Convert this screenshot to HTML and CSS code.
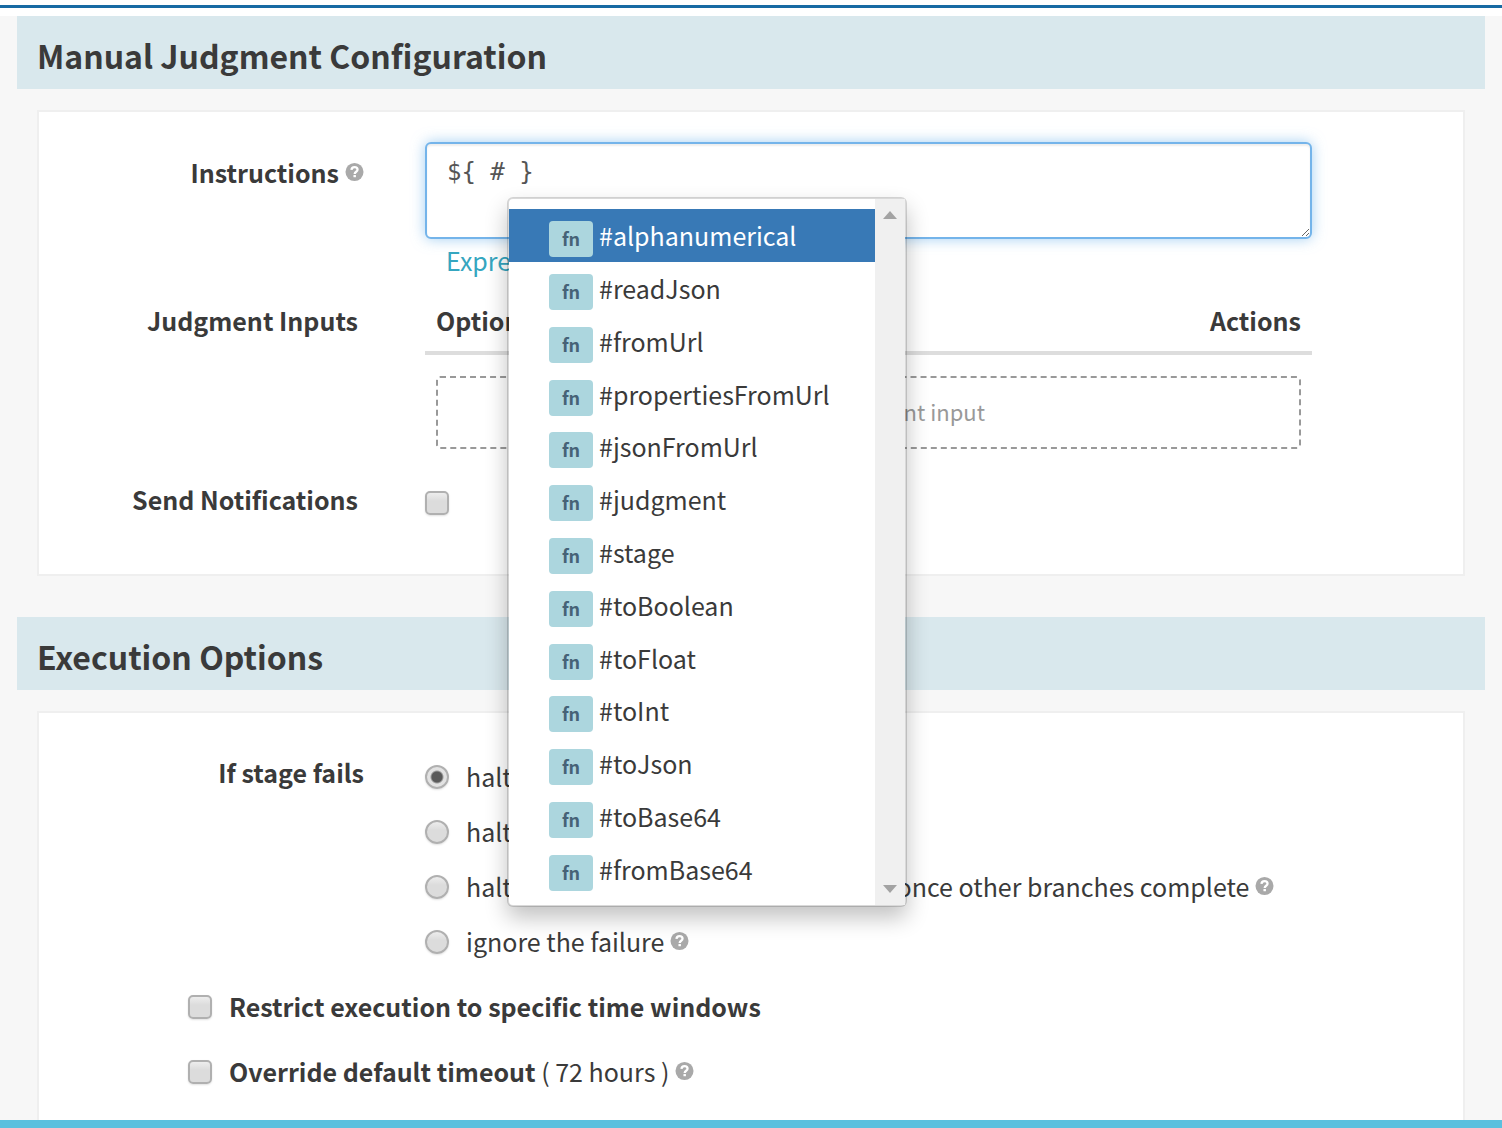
FILE: index.html
```html
<!DOCTYPE html>
<html lang="en">
<head>
<meta charset="utf-8">
<title>Manual Judgment Configuration</title>
<link rel="stylesheet" href="styles.css">
</head>
<body>
<svg class="sprite" aria-hidden="true">
  <symbol id="help" viewBox="0 0 20 20">
    <circle cx="10" cy="10" r="9.5" fill="currentColor"/>
    <path d="M6.8 7.8C6.9 5.700 8.300 4.900 10 4.900C11.900 4.900 13.200 6 13.200 7.600C13.200 9.800 10.200 9.700 10.200 12" fill="none" stroke="#fff" stroke-width="2.400"/>
    <rect x="8.900" y="13.200" width="2.600" height="2.300" fill="#fff"/>
  </symbol>
  <symbol id="plus" viewBox="0 0 20 20">
    <circle cx="10" cy="10" r="9.5" fill="currentColor"/>
    <path d="M10 5V15M5 10H15" stroke="#fff" stroke-width="3"/>
  </symbol>
</svg>
<header class="topbar"></header>
<main class="content">
  <section class="section">
    <h2 class="section-title">Manual Judgment Configuration</h2>
    <div class="card">
      <div class="row row-instructions">
        <div class="row-label with-help"><label for="instructions">Instructions</label><svg class="help"><use href="#help"/></svg></div>
        <div class="field">
          <textarea id="instructions" class="instructions" spellcheck="false">${ # }</textarea>
          <a class="docs-link" href="#docs">Expression Docs</a>
          <div class="menu">
            <ul class="menu-list">
              <li class="menu-item active"><span class="badge">fn</span>#alphanumerical</li>
              <li class="menu-item"><span class="badge">fn</span>#readJson</li>
              <li class="menu-item"><span class="badge">fn</span>#fromUrl</li>
              <li class="menu-item"><span class="badge">fn</span>#propertiesFromUrl</li>
              <li class="menu-item"><span class="badge">fn</span>#jsonFromUrl</li>
              <li class="menu-item"><span class="badge">fn</span>#judgment</li>
              <li class="menu-item"><span class="badge">fn</span>#stage</li>
              <li class="menu-item"><span class="badge">fn</span>#toBoolean</li>
              <li class="menu-item"><span class="badge">fn</span>#toFloat</li>
              <li class="menu-item"><span class="badge">fn</span>#toInt</li>
              <li class="menu-item"><span class="badge">fn</span>#toJson</li>
              <li class="menu-item"><span class="badge">fn</span>#toBase64</li>
              <li class="menu-item"><span class="badge">fn</span>#fromBase64</li>
            </ul>
            <div class="scrollbar"><span class="arrow up"></span><span class="arrow down"></span></div>
          </div>
        </div>
      </div>
      <div class="row row-inputs">
        <div class="row-label">Judgment Inputs</div>
        <table class="inputs">
          <thead><tr><th>Option</th><th class="actions">Actions</th></tr></thead>
          <tbody><tr><td colspan="2"><button type="button" class="add"><svg class="plus"><use href="#plus"/></svg>Add judgment input</button></td></tr></tbody>
        </table>
      </div>
      <div class="row row-notify">
        <label class="row-label" for="notify">Send Notifications</label>
        <div class="choice"><input type="checkbox" id="notify" class="box"></div>
      </div>
    </div>
  </section>
  <section class="section">
    <h2 class="section-title">Execution Options</h2>
    <div class="card card-last">
      <div class="row">
        <div class="row-label with-help" id="fails">If stage fails</div>
        <div class="choices" role="radiogroup" aria-labelledby="fails">
          <label class="choice"><input type="radio" name="fail" class="box round" checked><span>halt the entire pipeline</span></label>
          <label class="choice"><input type="radio" name="fail" class="box round"><span>halt this branch of the pipeline</span></label>
          <label class="choice"><input type="radio" name="fail" class="box round"><span>halt this branch and fail the pipeline, once other branches complete</span><svg class="help"><use href="#help"/></svg></label>
          <label class="choice"><input type="radio" name="fail" class="box round"><span>ignore the failure</span><svg class="help"><use href="#help"/></svg></label>
        </div>
      </div>
      <div class="options">
        <label class="choice"><input type="checkbox" class="box"><strong>Restrict execution to specific time windows</strong></label>
        <label class="choice"><input type="checkbox" class="box"><span><strong>Override default timeout</strong> ( 72 hours )</span><svg class="help"><use href="#help"/></svg></label>
      </div>
    </div>
  </section>
</main>
<footer class="bottombar"></footer>
</body>
</html>
```
FILE: styles.css
```css
* { box-sizing: border-box; }

body {
  margin: 0;
  min-height: 100vh;
  display: flex;
  flex-direction: column;
  background: #fff;
  color: #3a3a3a;
  font: 25px/32px "Noto Sans CJK SC", "Noto Sans", sans-serif;
}

.sprite { display: none; }

.topbar {
  height: 8px;
  margin-bottom: 8px;
  border-bottom: 3px solid #176aa3;
}

.content {
  flex: 1;
  padding: 0 17px;
  display: flex;
  flex-direction: column;
  gap: 41px;
  background: #f7f7f7;
}

.bottombar { height: 8px; background: #5bc0de; }

.section { display: flex; flex-direction: column; gap: 21px; }
.section:last-child { flex: 1; }

.section-title {
  margin: 0;
  padding: 19px 20px 14px;
  background: #d9e8ed;
  font-size: 32px;
  line-height: 40px;
  font-weight: 700;
}

.card {
  margin: 0 20px;
  padding: 30px 151px 59px 0;
  border: 2px solid #efefef;
  background: #fff;
}

.card-last { flex: 1; padding-top: 43px; padding-bottom: 16px; border-bottom: 0; }

.row {
  display: grid;
  grid-template-columns: 325px minmax(0, 1fr);
  column-gap: 61px;
}

.row-label { font-weight: 700; text-align: right; padding-right: 6px; }
.row-label.with-help {
  display: flex;
  justify-content: flex-end;
  gap: 6px;
  padding-right: 0;
}
.row-instructions .row-label { padding-top: 14px; }

.help { flex: none; width: 19px; height: 20px; margin-top: 6px; color: #a9a9a9; }

.field { position: relative; }

.instructions {
  display: block;
  width: 100%;
  height: 97px;
  padding: 11px 20px;
  border: 2px solid #74b4ea;
  border-radius: 6px;
  outline: 0;
  box-shadow: inset 0 2px 2px rgba(0, 0, 0, .07), 0 0 14px rgba(102, 175, 233, .6);
  resize: vertical;
  color: #555;
  font: 24px/34px "DejaVu Sans Mono", monospace;
}

.docs-link {
  display: block;
  margin: 5px 0 0 21px;
  color: #35a6c0;
  text-decoration: none;
}

.menu {
  position: absolute;
  left: 82px;
  top: 55px;
  z-index: 2;
  width: 400px;
  height: 710px;
  display: flex;
  border: 2px solid rgba(0, 0, 0, .15);
  border-radius: 6px;
  background: #fff;
  background-clip: padding-box;
  box-shadow: 0 11px 22px rgba(0, 0, 0, .24);
}

.menu-list {
  flex: 1;
  margin: 0;
  padding: 10px 0;
  display: grid;
  grid-auto-rows: 1fr;
  list-style: none;
}

.menu-item {
  display: flex;
  align-items: center;
  gap: 6px;
  padding-left: 40px;
}
.menu-item.active { background: #3879b6; color: #fff; }

.badge {
  width: 44px;
  margin-top: 8px;
  padding-bottom: 2px;
  border-radius: 4px;
  background: #acd6de;
  color: #466277;
  text-align: center;
  font-size: 18px;
  line-height: 34px;
  font-weight: 700;
}

.scrollbar {
  width: 30px;
  padding: 12px 8px;
  display: flex;
  flex-direction: column;
  justify-content: space-between;
  background: #f0f0f0;
}
.arrow { border: 7px solid transparent; }
.arrow.up { border-top: 0; border-bottom: 8px solid #a3a3a3; }
.arrow.down { border-bottom: 0; border-top: 8px solid #a3a3a3; }

.row-inputs { margin-top: 28px; }

.inputs { width: 100%; border-collapse: collapse; }
.inputs th {
  padding: 0 11px 15px;
  border-bottom: 4px solid #ddd;
  text-align: left;
  font-weight: 700;
}
.inputs .actions { text-align: right; }
.inputs td { padding: 21px 11px 0; }

.add {
  display: flex;
  align-items: center;
  justify-content: center;
  gap: 8px;
  width: 100%;
  height: 73px;
  padding-bottom: 5px;
  border: 2px dashed #999;
  border-radius: 4px;
  background: transparent;
  color: #999;
  font: inherit;
  font-size: 22px;
}
.plus { width: 20px; height: 20px; }

.row-notify { margin-top: 34px; }

.choices { display: flex; flex-direction: column; gap: 23px; padding-top: 4px; }
.choice { display: flex; gap: 6px; }

.box {
  flex: none;
  appearance: none;
  width: 24px;
  height: 24px;
  margin: 8px 11px 0 0;
  border: 2px solid #b0b0b0;
  border-radius: 5px;
  background: linear-gradient(#ededed, #dcdcdc 40%);
  box-shadow: 0 1px 2px rgba(0, 0, 0, .12);
}
.round { margin-top: 5px; border-radius: 50%; }
.round:checked { background: radial-gradient(circle, #5a5a5a 5px, #e2e2e2 7px); }

.options {
  display: flex;
  flex-direction: column;
  gap: 33px;
  margin: 33px 0 0 149px;
}
.options .box { margin-top: 5px; }
```
